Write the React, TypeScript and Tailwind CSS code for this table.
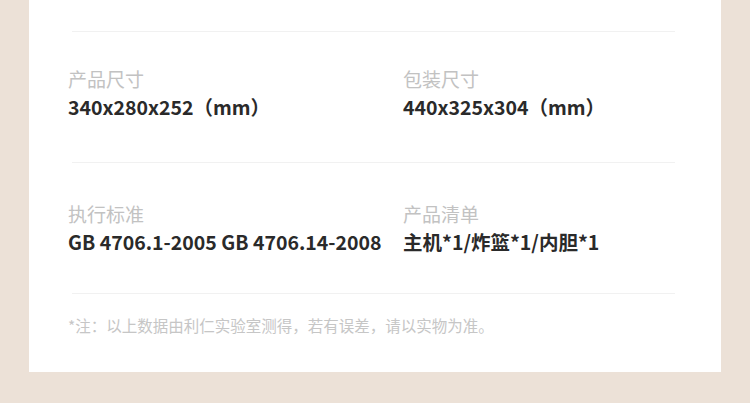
import React from "react";

interface SpecProps {
  label: string;
  value: string;
}

function Spec({ label, value }: SpecProps) {
  return (
    <div className="flex flex-col">
      <div className="text-[19px] leading-[28px] text-[#c2c2c2]">{label}</div>
      <div className="text-[19.5px] leading-[28px] font-bold text-[#2a2a2a] whitespace-nowrap">{value}</div>
    </div>
  );
}

function Divider() {
  return <div className="h-px bg-[#f1f1f1] ml-1 mr-[3px]" />;
}

export default function App() {
  return (
    <div
      className="w-[750px] h-[403px] overflow-hidden bg-[#ece1d7] flex flex-col"
      style={{ fontFamily: '"Noto Sans CJK SC", "Noto Sans", sans-serif' }}
    >
      <div className="mx-[29px] w-[692px] bg-white pt-[31px] pb-[37px] pl-[39px] pr-[43px]">
        <Divider />
        <div className="grid grid-cols-[335px_1fr] mt-[33px]">
          <Spec label="产品尺寸" value="340x280x252（mm）" />
          <Spec label="包装尺寸" value="440x325x304（mm）" />
        </div>
        <div className="mt-[41px]">
          <Divider />
        </div>
        <div className="grid grid-cols-[335px_1fr] mt-[37px]">
          <Spec label="执行标准" value="GB 4706.1-2005 GB 4706.14-2008" />
          <Spec label="产品清单" value="主机*1/炸篮*1/内胆*1" />
        </div>
        <div className="mt-[37px]">
          <Divider />
        </div>
        <div className="mt-[21px] text-[15.5px] leading-[20px] text-[#c6c6c6] whitespace-nowrap">
          *注：以上数据由利仁实验室测得，若有误差，请以实物为准。
        </div>
      </div>
    </div>
  );
}
